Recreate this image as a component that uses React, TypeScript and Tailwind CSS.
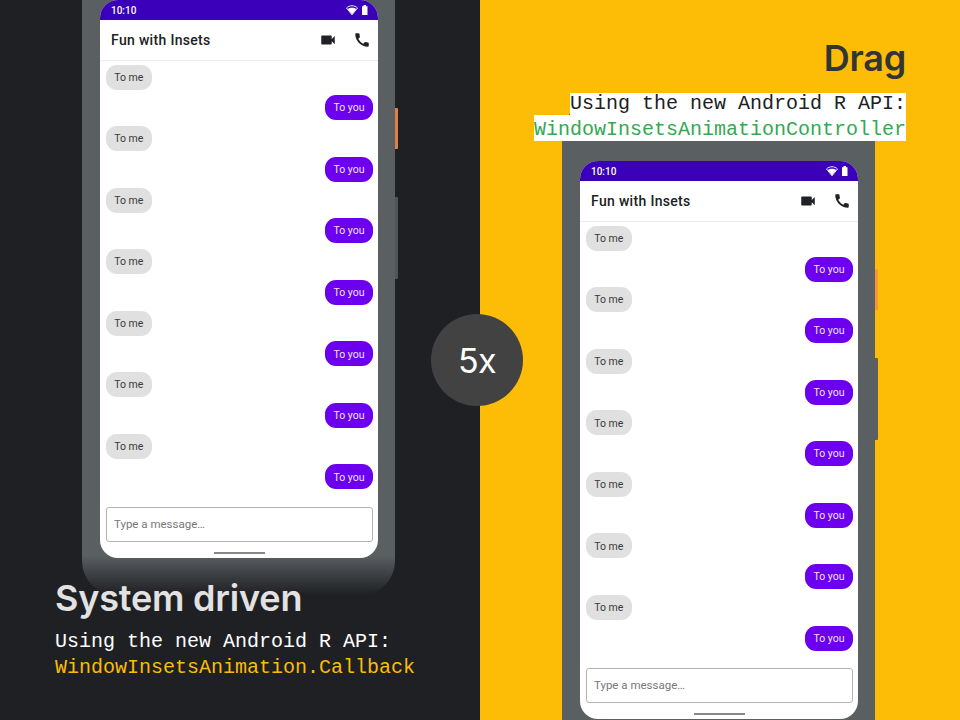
const PAIRS = [0, 1, 2, 3, 4, 5, 6];

function Status() {
  return (
    <div className="flex h-[20px] shrink-0 items-center justify-between bg-[#3b00b9] pl-[11px] pr-[9px] text-white">
      <span className="pt-px text-[10px] leading-[20px] font-medium">10:10</span>
      <svg width="24" height="12" viewBox="0 0 24 12" fill="#fff">
        <path d="M1.500 4C4.500 1 9.500 1 12.500 4L7 10.800Z" fill="none" stroke="#fff" strokeWidth="0.9" />
        <path d="M2.800 5C5 3.300 9 3.300 11.200 5L7 10.500Z" />
        <path d="M17 2.200H18.500V1H21V2.200H22.500V11H17Z" />
      </svg>
    </div>
  );
}

function Screen() {
  return (
    <div className="flex h-[558px] w-[278px] flex-col overflow-hidden rounded-[18px] bg-white font-[Roboto,sans-serif]">
      <Status />
      <div className="flex h-[41px] shrink-0 items-center border-b border-[#ececec] pl-[11px] pr-[7px]">
        <span className="flex-1 pt-px text-[14px] font-medium tracking-[0.32px] text-[#202124]">Fun with Insets</span>
        <svg className="mr-[16px]" width="18" height="18" viewBox="0 0 24 24" fill="#202124">
          <path d="M17 10.500V7c0-.55-.45-1-1-1H4c-.55 0-1 .45-1 1v10c0 .55.45 1 1 1h12c.55 0 1-.45 1-1v-3.500l4 4v-11l-4 4z" />
        </svg>
        <svg width="18" height="18" viewBox="0 0 24 24" fill="#202124">
          <path d="M20.010 15.380c-1.230 0-2.420-.2-3.530-.56-.35-.12-.74-.03-1.010.24l-1.570 1.970c-2.830-1.350-5.480-3.900-6.890-6.830l1.950-1.660c.27-.28.35-.67.24-1.020-.37-1.110-.56-2.300-.56-3.530 0-.54-.45-.99-.99-.99H4.190C3.650 3 3 3.240 3 3.990 3 13.280 10.730 21 20.010 21c.71 0 .99-.63.99-1.180v-3.450c0-.54-.45-.99-.99-.99z" />
        </svg>
      </div>
      <div className="flex flex-col pr-[5px] pl-[6px] pt-[3.500px] text-[10.500px]">
        {PAIRS.map((i) => (
          <div key={i} className="flex h-[61.540px] shrink-0 flex-col">
            <div className="flex h-[30.770px] items-start">
              <span className="flex h-[25px] w-[45.500px] items-center justify-center rounded-[11px] bg-[#e0e0e0] pt-px text-[#3a3a3a]">To me</span>
            </div>
            <div className="flex h-[30.770px] items-start justify-end">
              <span className="flex h-[25px] w-[48px] items-center justify-center rounded-[11px] bg-[#6c00ee] pt-px text-[#eee4fc]">To you</span>
            </div>
          </div>
        ))}
      </div>
      <div className="mr-[5px] ml-[6px] mt-[11.700px] flex h-[35px] shrink-0 items-center rounded-[3px] border border-[#b4b4b0] pl-[7px] text-[11.500px] text-[#777]">
        Type a message…
      </div>
      <div className="mx-auto mt-[10px] h-[2px] w-[51px] shrink-0 bg-[#888]" />
    </div>
  );
}

function Phone({ fade }: { fade?: boolean }) {
  return (
    <div className="flex w-[316px] items-start">
      <div
        className={
          fade
            ? "flex h-[655px] w-[313px] shrink-0 rounded-[34px] bg-linear-to-b from-[#5a5f62] from-[94%] to-[#1f2024] to-[100%] pt-[60px] pl-[18px]"
            : "flex h-[655px] w-[313px] shrink-0 rounded-[34px] bg-[#5a5f62] pt-[60px] pl-[18px]"
        }
      >
        <Screen />
      </div>
      <div className="flex flex-col pt-[168px]">
        <div className={fade ? "h-[41px] w-[3px] rounded-r-[1px] bg-[#e07f49]" : "h-[41px] w-[3px] rounded-r-[1px] bg-[#f99535]"} />
        <div className={fade ? "mt-[48px] h-[82px] w-[3px] rounded-r-[1px] bg-[#505558]" : "mt-[48px] h-[82px] w-[3px] rounded-r-[1px] bg-[#5a5f62]"} />
      </div>
    </div>
  );
}

export default function App() {
  return (
    <main className="relative flex h-[720px] w-[960px] overflow-hidden">
      <section className="h-[720px] w-[480px] overflow-hidden bg-[#1f2024]">
        <div className="-mt-[60px] pl-[82px]">
          <Phone fade />
        </div>
        <div className="relative -mt-[23px] pl-[55px]">
          <h1 className="h-[57px] font-[Inter,sans-serif] text-[36px] leading-[52px] font-semibold tracking-[-0.2px] whitespace-nowrap text-[#e2e2e2]">System driven</h1>
          <div className="font-['Liberation_Mono',monospace] text-[20px] leading-[26px] whitespace-nowrap">
            <p className="text-white">Using the new Android R API:</p>
            <p className="text-[#fcbc05]">WindowInsetsAnimation.Callback</p>
          </div>
        </div>
      </section>
      <section className="h-[720px] w-[480px] overflow-hidden bg-[#fdbd06]">
        <div className="relative z-10 flex h-[141px] flex-col items-end pt-[32px] pr-[54px]">
          <h1 className="h-[61px] font-[Inter,sans-serif] text-[36px] leading-[52px] font-semibold tracking-[-0.2px] text-[#333436]">Drag</h1>
          <div className="flex flex-col items-end font-['Liberation_Mono',monospace] text-[20px] whitespace-nowrap">
            <p className="h-[22px] bg-white leading-[22px] text-[#202124]">Using the new Android R API:</p>
            <p className="h-[26px] bg-white leading-[29px] text-[#34a853]">WindowInsetsAnimationController</p>
          </div>
        </div>
        <div className="-mt-[39.700px] pl-[82px]">
          <Phone />
        </div>
      </section>
      <div className="absolute top-[314px] left-[431px] z-20 flex h-[92px] w-[92px] items-center justify-center rounded-full bg-[#424242] pt-px font-[Inter,sans-serif] text-[34px] tracking-[-0.500px] text-white">
        5x
      </div>
    </main>
  );
}
